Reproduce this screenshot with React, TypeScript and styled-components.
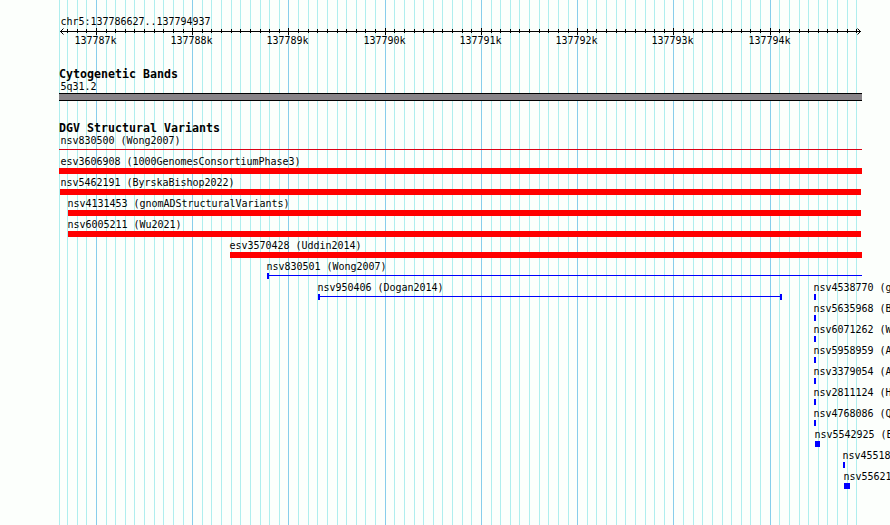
import React from 'react';
import styled, {createGlobalStyle} from 'styled-components';

const LEFT = 59;
const RIGHT = 862;
const FIRST_MAJOR = 95.875;
const STEP = 9.6258;

type Glyph = 'box' | 'line' | 'span';

interface Feature {
  name: string;
  start: number;
  end: number;
  glyph: Glyph;
  color: string;
  labelStart?: number;
}

const RED = '#ff0000';
const BLUE = '#0000ff';

const features: Feature[] = [
  {name: 'nsv830500 (Wong2007)', start: 59, end: 862, glyph: 'line', color: '#dc0014', labelStart: 60},
  {name: 'esv3606908 (1000GenomesConsortiumPhase3)', start: 59, end: 862, glyph: 'box', color: RED, labelStart: 60},
  {name: 'nsv5462191 (ByrskaBishop2022)', start: 60, end: 861, glyph: 'box', color: RED},
  {name: 'nsv4131453 (gnomADStructuralVariants)', start: 68, end: 861, glyph: 'box', color: RED, labelStart: 67},
  {name: 'nsv6005211 (Wu2021)', start: 68, end: 861, glyph: 'box', color: RED, labelStart: 67},
  {name: 'esv3570428 (Uddin2014)', start: 230, end: 862, glyph: 'box', color: RED, labelStart: 229},
  {name: 'nsv830501 (Wong2007)', start: 267, end: 862, glyph: 'line', color: BLUE, labelStart: 266},
];

const shortFeatures: Feature[] = [
  {name: 'nsv4538770 (gnomAD', start: 814, end: 816, glyph: 'box', color: BLUE, labelStart: 813},
  {name: 'nsv5635968 (ByrskaBishop2022)', start: 814, end: 816, glyph: 'box', color: BLUE, labelStart: 813},
  {name: 'nsv6071262 (Wu2021)', start: 814, end: 816, glyph: 'box', color: BLUE, labelStart: 813},
  {name: 'nsv5958959 (Audano2019)', start: 814, end: 816, glyph: 'box', color: BLUE, labelStart: 813},
  {name: 'nsv3379054 (Audano2019)', start: 814, end: 816, glyph: 'box', color: BLUE, labelStart: 813},
  {name: 'nsv2811124 (HGSVC)', start: 814, end: 816, glyph: 'box', color: BLUE, labelStart: 813},
  {name: 'nsv4768086 (Quan2021)', start: 814, end: 816, glyph: 'box', color: BLUE, labelStart: 813},
  {name: 'nsv5542925 (Ebert2021)', start: 815, end: 820, glyph: 'box', color: BLUE, labelStart: 814},
  {name: 'nsv4551813', start: 843, end: 845, glyph: 'box', color: BLUE, labelStart: 842},
  {name: 'nsv5562198', start: 844, end: 850, glyph: 'box', color: BLUE, labelStart: 843},
];

const ticks = Array.from({length: 83}, (_, i) => i - 3).map((i) => ({
  x: Math.round(FIRST_MAJOR + i * STEP),
  major: i % 10 === 0,
  label: `${137787 + i / 10}k`,
}));

const Grid = () => (
  <GridSvg width="890" height="525" shapeRendering="crispEdges">
    <rect x={LEFT} y="0" width="1" height="525" fill="#afeeee" />
    {ticks.map((t) => (
      <rect key={t.x} x={t.x} y="0" width="1" height="525" fill={t.major ? '#87ceeb' : '#afeeee'} />
    ))}
  </GridSvg>
);

const Ruler = () => (
  <RulerSvg width="890" height="26">
    <g shapeRendering="crispEdges">
      <rect x="60" y="4" width="801" height="1" />
      {ticks.map((t) => (
        <rect key={t.x} x={t.x} y={t.major ? 1 : 2} width="1" height={t.major ? 7 : 4} />
      ))}
    </g>
    <path d="M63.5 1.5L60.5 4.5L63.5 7.5M857.5 1.5L860.5 4.5L857.5 7.5" fill="none" stroke="#000" />
    {ticks.filter((t) => t.major).map((t) => (
      <RulerLabel key={t.x} x={t.x - 21.5} y="17">{t.label}</RulerLabel>
    ))}
  </RulerSvg>
);

const FeatureRow = ({feature: f}: {feature: Feature}) => (
  <Row>
    <Label $left={f.labelStart ?? f.start}>{f.name}</Label>
    <Mark $start={f.start} $end={f.end} $color={f.color} $glyph={f.glyph}>
      {f.glyph !== 'box' && f.start > LEFT && <Cap $color={f.color} />}
      {f.glyph !== 'box' && <Stem $color={f.color} />}
      {f.glyph === 'span' && <Cap $color={f.color} />}
    </Mark>
  </Row>
);

const App = () => (
  <Page>
    <GlobalStyle />
    <Grid />
    <Content>
      <Region>chr5:137786627..137794937</Region>
      <Ruler />
      <Track $gap={15}>
        <TrackTitle>Cytogenetic Bands</TrackTitle>
        <Label $left={60}>5q31.2</Label>
        <Band />
      </Track>
      <Track $gap={21}>
        <TrackTitle>DGV Structural Variants</TrackTitle>
        {features.map((f) => <FeatureRow key={f.name} feature={f} />)}
        <SharedRow>
          <FeatureRow feature={{name: 'nsv950406 (Dogan2014)', start: 318, end: 782, glyph: 'span', color: BLUE, labelStart: 317}} />
          <FeatureRow feature={shortFeatures[0]} />
        </SharedRow>
        {shortFeatures.slice(1).map((f) => <FeatureRow key={f.name} feature={f} />)}
      </Track>
    </Content>
  </Page>
);

export default App;

const GlobalStyle = createGlobalStyle`
  body {
    margin: 0;
    background: #fcfffc;
    overflow: hidden;
  }
`;

const Page = styled.div`
  position: relative;
  width: 890px;
  height: 525px;
  overflow: hidden;
  background: #fcfffc;
  color: #000;
  font-family: 'DejaVu Sans Mono', monospace;
  font-size: 10px;
  line-height: 13px;
`;

const GridSvg = styled.svg`
  position: absolute;
  top: 0;
  left: 0;
`;

const Content = styled.div`
  position: relative;
  padding-top: 15px;
`;

const Region = styled.div`
  height: 12px;
  padding-left: 60.5px;
  letter-spacing: -0.02px;
`;

const RulerSvg = styled.svg`
  display: block;
`;

const RulerLabel = styled.text`
  font-size: 10px;
`;

const Track = styled.section<{$gap: number}>`
  padding-top: ${(p) => p.$gap}px;
`;

const TrackTitle = styled.h2`
  height: 12px;
  margin: 0;
  padding-left: 59px;
  font-size: 11.6px;
  line-height: 13px;
  font-weight: bold;
  letter-spacing: 0.016px;
`;

const Label = styled.div<{$left: number}>`
  height: 13px;
  padding-left: ${(p) => p.$left + 0.5}px;
  letter-spacing: -0.02px;
  white-space: nowrap;
`;

const Band = styled.div`
  height: 8px;
  width: ${RIGHT - LEFT}px;
  box-sizing: border-box;
  margin-left: ${LEFT}px;
  background: #888488;
  border: solid #000;
  border-width: 1px 0;
`;

const Row = styled.div`
  height: 21px;
`;

const SharedRow = styled.div`
  display: grid;
  height: 21px;

  & > * {
    grid-area: 1 / 1;
    min-width: 0;
  }
`;

const Mark = styled.div<{$start: number; $end: number; $color: string; $glyph: Glyph}>`
  display: flex;
  height: 6px;
  width: ${(p) => p.$end - p.$start}px;
  margin-left: ${(p) => p.$start}px;
  background: ${(p) => (p.$glyph === 'box' ? p.$color : 'none')};
`;

const Cap = styled.span<{$color: string}>`
  width: 2px;
  background: ${(p) => p.$color};
`;

const Stem = styled.span<{$color: string}>`
  flex: 1;
  height: 1px;
  margin-top: 2px;
  background: ${(p) => p.$color};
`;
